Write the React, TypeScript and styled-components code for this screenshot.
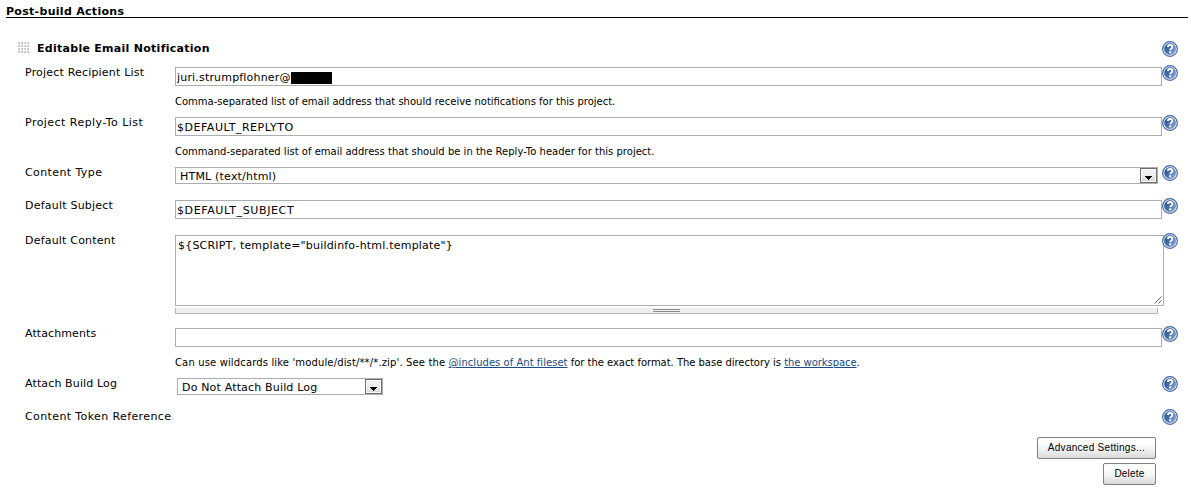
import React from "react";
import styled, { createGlobalStyle } from "styled-components";

const GlobalStyle = createGlobalStyle`
  * { box-sizing: border-box; }
  body {
    margin: 0;
    background: #fff;
    color: #000;
    font-family: Verdana, "DejaVu Sans", sans-serif;
    font-size: 11px;
    line-height: 14px;
  }
`;

const Page = styled.main`
  width: 1191px;
  height: 492px;
  padding: 4px 3px 0 6px;
  overflow: hidden;
`;

const T = styled.span<{ $ls?: number }>`
  white-space: pre;
  letter-spacing: ${(p) => p.$ls ?? 0}px;
`;

const SectionTitle = styled.h2`
  margin: 0 0 23px;
  height: 14px;
  border-bottom: 1px solid #000;
  font-size: 11px;
  line-height: 16px;
  font-weight: bold;
`;

const Row = styled.div<{ $h: number }>`
  display: grid;
  grid-template-columns: 150px 987px 16px;
  height: ${(p) => p.$h}px;
  padding-left: 19px;
  box-sizing: content-box;
  align-items: start;
`;

const Label = styled.label`
  line-height: 16px;
`;

const HeadRow = styled.div`
  display: flex;
  height: 24px;
  padding-left: 12px;
  align-items: flex-start;
`;

const HeadTitle = styled.h3`
  flex: 0 0 1133px;
  margin: 0;
  padding-left: 8px;
  font-size: 11px;
  line-height: 16px;
  font-weight: bold;
`;

const Grip = styled.svg`
  flex: none;
  display: block;
  margin-top: 1px;
`;

const HelpSvg = styled.svg`
  display: block;
  position: relative;
  flex: none;
`;

const Control = styled.div`
  padding-top: 2px;
`;

const TextField = styled.div`
  display: flex;
  align-items: center;
  height: 19px;
  padding: 2px 0 0 1px;
  border: 1px solid #abadb3;
  background: #fff;
`;

const Redacted = styled.span`
  width: 41px;
  height: 12px;
  background: #000;
`;

const SelectBox = styled.div<{ $w: number; $indent?: number }>`
  display: flex;
  align-items: center;
  justify-content: space-between;
  width: ${(p) => p.$w}px;
  height: 17px;
  margin-left: ${(p) => p.$indent ?? 0}px;
  padding-left: 4px;
  border: 1px solid #abadb3;
  line-height: 15px;
`;

const SelectValue = styled(T)`
  padding-top: 1px;
`;

const Arrow = styled.span`
  display: flex;
  align-items: flex-end;
  justify-content: center;
  width: 17px;
  height: 15px;
  padding-bottom: 2px;
  border: 1px solid #707070;
  background: linear-gradient(#f4f4f4, #ececec 50%, #d4d4d4);
  box-shadow: inset 0 0 0 1px #f8f8f8;
`;

const Area = styled.div`
  display: flex;
  justify-content: space-between;
  width: 989px;
  height: 71px;
  padding: 3px 0 0 2px;
  border: 1px solid #abadb3;
`;

const Resizer = styled.svg`
  display: block;
  align-self: flex-end;
`;

const ResizeBar = styled.div`
  display: flex;
  justify-content: center;
  width: 983px;
  height: 6px;
  margin-top: 2px;
  padding-top: 1px;
  border: 1px solid #b4b4b4;
  border-top: 0;
  background: #eee;
`;

const BarGrip = styled.span`
  width: 27px;
  height: 3px;
  border: solid #8c8c8c;
  border-width: 1px 0;
`;

const Hint = styled.p`
  margin: 9px 0 0;
  font-size: 10px;
  line-height: 14px;
`;

const Link = styled.a`
  color: #204a87;
  text-decoration: underline;
  text-underline-offset: 1px;
  text-decoration-thickness: 1px;
`;

const Actions = styled.div`
  display: flex;
  flex-direction: column;
  align-items: flex-end;
  gap: 4px;
  width: 1150px;
`;

const Button = styled.button<{ $w: number }>`
  width: ${(p) => p.$w}px;
  height: 22px;
  padding: 0;
  border: 1px solid #808080;
  border-radius: 2px;
  background: linear-gradient(#fff 25%, #f1f1f1 60%, #d9d9d9);
  color: #000;
  font-family: "Liberation Sans", Arial, sans-serif;
  font-size: 10px;
  line-height: 18px;
`;

const Help = () => (
  <HelpSvg width="16" height="16" viewBox="0 0 16 16" role="img" aria-label="Help">
    <defs>
      <linearGradient id="ball" x1="0" y1="0.2" x2="1" y2="0.8">
        <stop offset="0" stopColor="#2a5191" />
        <stop offset="0.5" stopColor="#4a73b1" />
        <stop offset="1" stopColor="#8aa9d4" />
      </linearGradient>
    </defs>
    <circle cx="8" cy="8" r="7.35" fill="#fff" stroke="#3d65a5" strokeWidth="1.2" />
    <circle cx="8" cy="8" r="5.7" fill="url(#ball)" stroke="#45699f" strokeWidth="0.4" />
    <path d="M5.9 6.1C5.9 4.6 6.8 4 8.1 4s2.3.7 2.3 1.9c0 1.6-2.1 1.6-2.1 3.3" fill="none" stroke="#fff" strokeWidth="1.8" />
    <rect x="7.2" y="10.3" width="2" height="2" fill="#fff" />
  </HelpSvg>
);

const DragGrip = () => (
  <Grip width="11" height="11" viewBox="0 0 11 11" shapeRendering="crispEdges">
    {[0, 3, 6, 9].map((y) =>
      [0, 3, 6, 9].map((x) => (
        <React.Fragment key={`${x}-${y}`}>
          <rect x={x} y={y} width="2" height="2" fill="#d8d8d8" />
          <rect x={x + 1} y={y} width="1" height="2" fill="#b8b8b8" />
        </React.Fragment>
      ))
    )}
  </Grip>
);

type FieldRowProps = { label: string; ls?: number; h: number; children?: React.ReactNode };

const FieldRow = ({ label, ls, h, children }: FieldRowProps) => (
  <Row $h={h}>
    <Label><T $ls={ls}>{label}</T></Label>
    <Control>{children}</Control>
    <Help />
  </Row>
);

type SelectProps = { w: number; indent?: number; ls?: number; value: string };

const Select = ({ w, indent, ls, value }: SelectProps) => (
  <SelectBox $w={w} $indent={indent}>
    <SelectValue $ls={ls}>{value}</SelectValue>
    <Arrow>
      <svg width="7" height="4" viewBox="0 0 7 4" shapeRendering="crispEdges">
        <path d="M0 0h7v1h-1v1h-1v1h-1v1h-1v-1h-1v-1h-1v-1h-1z" />
      </svg>
    </Arrow>
  </SelectBox>
);

export default function App() {
  return (
    <>
      <GlobalStyle />
      <Page>
        <SectionTitle><T $ls={0.3}>Post-build Actions</T></SectionTitle>
        <HeadRow>
          <DragGrip />
          <HeadTitle><T $ls={0.28}>Editable Email Notification</T></HeadTitle>
          <Help />
        </HeadRow>
        <FieldRow label="Project Recipient List" ls={0.19} h={50}>
          <TextField><T $ls={0.18}>juri.strumpflohner@</T><Redacted /></TextField>
          <Hint><T>Comma-separated list of email address that should receive notifications for this project.</T></Hint>
        </FieldRow>
        <FieldRow label="Project Reply-To List" ls={0.46} h={50}>
          <TextField><T $ls={0.53}>$DEFAULT_REPLYTO</T></TextField>
          <Hint><T $ls={0.01}>Command-separated list of email address that should be in the Reply-To header for this project.</T></Hint>
        </FieldRow>
        <FieldRow label="Content Type" ls={0.4} h={33}>
          <Select w={983} ls={0.2} value="HTML (text/html)" />
        </FieldRow>
        <FieldRow label="Default Subject" ls={0.22} h={35}>
          <TextField><T $ls={0.62}>$DEFAULT_SUBJECT</T></TextField>
        </FieldRow>
        <FieldRow label="Default Content" ls={0.2} h={93}>
          <Area>
            <T $ls={0.2}>{'${SCRIPT, template="buildinfo-html.template"}'}</T>
            <Resizer width="9" height="9" viewBox="0 0 9 9">
              <path d="M0.5 7.5L7.5 0.5M4.5 7.5L7.5 4.5" stroke="#666" fill="none" />
            </Resizer>
          </Area>
          <ResizeBar><BarGrip /></ResizeBar>
        </FieldRow>
        <FieldRow label="Attachments" ls={0.09} h={50}>
          <TextField />
          <Hint>
            <T $ls={0.14}>Can use wildcards like 'module/dist/**/*.zip'. See the </T>
            <Link href="#"><T $ls={0.03}>@includes of Ant fileset</T></Link>
            <T $ls={-0.03}> for the exact format. The base directory is </T>
            <Link href="#"><T $ls={-0.05}>the workspace</T></Link>
            <T>.</T>
          </Hint>
        </FieldRow>
        <FieldRow label="Attach Build Log" ls={0.13} h={33}>
          <Select w={206} indent={2} ls={0.17} value="Do Not Attach Build Log" />
        </FieldRow>
        <FieldRow label="Content Token Reference" ls={0.39} h={28} />
        <Actions>
          <Button $w={119}><T $ls={0.28}>Advanced Settings...</T></Button>
          <Button $w={53}><T $ls={0.2}>Delete</T></Button>
        </Actions>
      </Page>
    </>
  );
}
